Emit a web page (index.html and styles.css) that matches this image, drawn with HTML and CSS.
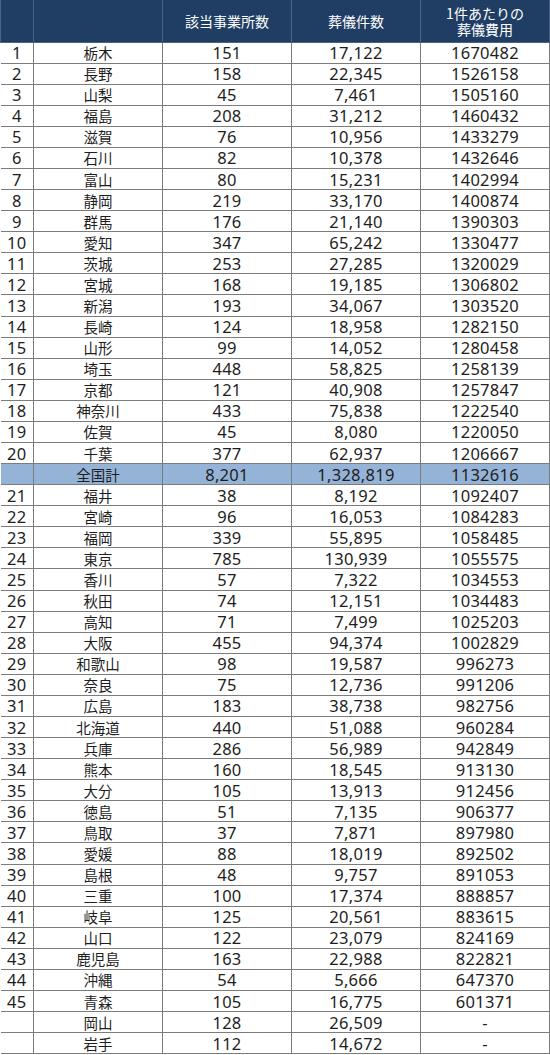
FILE: index.html
```html
<!DOCTYPE html>
<html lang="ja">
<head>
<meta charset="utf-8">
<link rel="stylesheet" href="styles.css">
</head>
<body>
<table class="rank-table">
<colgroup>
<col class="c-rank"><col class="c-name"><col class="c-num"><col class="c-num"><col class="c-num">
</colgroup>
<thead>
<tr class="head-row"><th></th><th></th><th>該当事業所数</th><th>葬儀件数</th><th><span class="hl">1件あたりの</span><span class="hl">葬儀費用</span></th></tr>
</thead>
<tbody>
<tr><td class="rank">1</td><td class="name">栃木</td><td class="num">151</td><td class="num">17,122</td><td class="num">1670482</td></tr>
<tr><td class="rank">2</td><td class="name">長野</td><td class="num">158</td><td class="num">22,345</td><td class="num">1526158</td></tr>
<tr><td class="rank">3</td><td class="name">山梨</td><td class="num">45</td><td class="num">7,461</td><td class="num">1505160</td></tr>
<tr><td class="rank">4</td><td class="name">福島</td><td class="num">208</td><td class="num">31,212</td><td class="num">1460432</td></tr>
<tr><td class="rank">5</td><td class="name">滋賀</td><td class="num">76</td><td class="num">10,956</td><td class="num">1433279</td></tr>
<tr><td class="rank">6</td><td class="name">石川</td><td class="num">82</td><td class="num">10,378</td><td class="num">1432646</td></tr>
<tr><td class="rank">7</td><td class="name">富山</td><td class="num">80</td><td class="num">15,231</td><td class="num">1402994</td></tr>
<tr><td class="rank">8</td><td class="name">静岡</td><td class="num">219</td><td class="num">33,170</td><td class="num">1400874</td></tr>
<tr><td class="rank">9</td><td class="name">群馬</td><td class="num">176</td><td class="num">21,140</td><td class="num">1390303</td></tr>
<tr><td class="rank">10</td><td class="name">愛知</td><td class="num">347</td><td class="num">65,242</td><td class="num">1330477</td></tr>
<tr><td class="rank">11</td><td class="name">茨城</td><td class="num">253</td><td class="num">27,285</td><td class="num">1320029</td></tr>
<tr><td class="rank">12</td><td class="name">宮城</td><td class="num">168</td><td class="num">19,185</td><td class="num">1306802</td></tr>
<tr><td class="rank">13</td><td class="name">新潟</td><td class="num">193</td><td class="num">34,067</td><td class="num">1303520</td></tr>
<tr><td class="rank">14</td><td class="name">長崎</td><td class="num">124</td><td class="num">18,958</td><td class="num">1282150</td></tr>
<tr><td class="rank">15</td><td class="name">山形</td><td class="num">99</td><td class="num">14,052</td><td class="num">1280458</td></tr>
<tr><td class="rank">16</td><td class="name">埼玉</td><td class="num">448</td><td class="num">58,825</td><td class="num">1258139</td></tr>
<tr><td class="rank">17</td><td class="name">京都</td><td class="num">121</td><td class="num">40,908</td><td class="num">1257847</td></tr>
<tr><td class="rank">18</td><td class="name">神奈川</td><td class="num">433</td><td class="num">75,838</td><td class="num">1222540</td></tr>
<tr><td class="rank">19</td><td class="name">佐賀</td><td class="num">45</td><td class="num">8,080</td><td class="num">1220050</td></tr>
<tr><td class="rank">20</td><td class="name">千葉</td><td class="num">377</td><td class="num">62,937</td><td class="num">1206667</td></tr>
<tr class="total"><td class="rank"></td><td class="name">全国計</td><td class="num">8,201</td><td class="num">1,328,819</td><td class="num">1132616</td></tr>
<tr><td class="rank">21</td><td class="name">福井</td><td class="num">38</td><td class="num">8,192</td><td class="num">1092407</td></tr>
<tr><td class="rank">22</td><td class="name">宮崎</td><td class="num">96</td><td class="num">16,053</td><td class="num">1084283</td></tr>
<tr><td class="rank">23</td><td class="name">福岡</td><td class="num">339</td><td class="num">55,895</td><td class="num">1058485</td></tr>
<tr><td class="rank">24</td><td class="name">東京</td><td class="num">785</td><td class="num">130,939</td><td class="num">1055575</td></tr>
<tr><td class="rank">25</td><td class="name">香川</td><td class="num">57</td><td class="num">7,322</td><td class="num">1034553</td></tr>
<tr><td class="rank">26</td><td class="name">秋田</td><td class="num">74</td><td class="num">12,151</td><td class="num">1034483</td></tr>
<tr><td class="rank">27</td><td class="name">高知</td><td class="num">71</td><td class="num">7,499</td><td class="num">1025203</td></tr>
<tr><td class="rank">28</td><td class="name">大阪</td><td class="num">455</td><td class="num">94,374</td><td class="num">1002829</td></tr>
<tr><td class="rank">29</td><td class="name">和歌山</td><td class="num">98</td><td class="num">19,587</td><td class="num">996273</td></tr>
<tr><td class="rank">30</td><td class="name">奈良</td><td class="num">75</td><td class="num">12,736</td><td class="num">991206</td></tr>
<tr><td class="rank">31</td><td class="name">広島</td><td class="num">183</td><td class="num">38,738</td><td class="num">982756</td></tr>
<tr><td class="rank">32</td><td class="name">北海道</td><td class="num">440</td><td class="num">51,088</td><td class="num">960284</td></tr>
<tr><td class="rank">33</td><td class="name">兵庫</td><td class="num">286</td><td class="num">56,989</td><td class="num">942849</td></tr>
<tr><td class="rank">34</td><td class="name">熊本</td><td class="num">160</td><td class="num">18,545</td><td class="num">913130</td></tr>
<tr><td class="rank">35</td><td class="name">大分</td><td class="num">105</td><td class="num">13,913</td><td class="num">912456</td></tr>
<tr><td class="rank">36</td><td class="name">徳島</td><td class="num">51</td><td class="num">7,135</td><td class="num">906377</td></tr>
<tr><td class="rank">37</td><td class="name">鳥取</td><td class="num">37</td><td class="num">7,871</td><td class="num">897980</td></tr>
<tr><td class="rank">38</td><td class="name">愛媛</td><td class="num">88</td><td class="num">18,019</td><td class="num">892502</td></tr>
<tr><td class="rank">39</td><td class="name">島根</td><td class="num">48</td><td class="num">9,757</td><td class="num">891053</td></tr>
<tr><td class="rank">40</td><td class="name">三重</td><td class="num">100</td><td class="num">17,374</td><td class="num">888857</td></tr>
<tr><td class="rank">41</td><td class="name">岐阜</td><td class="num">125</td><td class="num">20,561</td><td class="num">883615</td></tr>
<tr><td class="rank">42</td><td class="name">山口</td><td class="num">122</td><td class="num">23,079</td><td class="num">824169</td></tr>
<tr><td class="rank">43</td><td class="name">鹿児島</td><td class="num">163</td><td class="num">22,988</td><td class="num">822821</td></tr>
<tr><td class="rank">44</td><td class="name">沖縄</td><td class="num">54</td><td class="num">5,666</td><td class="num">647370</td></tr>
<tr><td class="rank">45</td><td class="name">青森</td><td class="num">105</td><td class="num">16,775</td><td class="num">601371</td></tr>
<tr><td class="rank"></td><td class="name">岡山</td><td class="num">128</td><td class="num">26,509</td><td class="num">-</td></tr>
<tr><td class="rank"></td><td class="name">岩手</td><td class="num">112</td><td class="num">14,672</td><td class="num">-</td></tr>
</tbody>
</table>
</body>
</html>
```

FILE: styles.css
```css
html, body {
  margin: 0;
  padding: 0;
  background: #ffffff;
}

.rank-table {
  width: 550px;
  table-layout: fixed;
  border-collapse: collapse;
  font-family: "Noto Sans", "Noto Sans CJK JP", sans-serif;
  color: #1e1e1e;
}

.c-rank { width: 33px; }
.c-name { width: 129px; }
.c-num { width: 129px; }

.head-row {
  height: 42px;
}

.head-row th {
  background: #203e63;
  color: #ffffff;
  font-weight: normal;
  font-family: "Noto Sans CJK JP", sans-serif;
  font-size: 14px;
  line-height: 16px;
  text-align: center;
  vertical-align: middle;
  padding: 0;
  border: 1px solid #4a6384;
  border-top: none;
}

.hl {
  display: block;
  height: 16px;
  overflow: visible;
}

.rank-table tbody tr {
  height: 21.08px;
}

.rank-table td {
  border: 1px solid #7c7c7c;
  padding: 0;
  text-align: center;
  vertical-align: middle;
  line-height: 19px;
  white-space: nowrap;
}

.rank-table td:first-child { border-left: none; }

.rank, .num {
  font-size: 16.5px;
  letter-spacing: 0.3px;
}

.name {
  font-family: "Noto Sans CJK JP", sans-serif;
  font-size: 14.5px;
}

.total td {
  background: #95b3d7;
}
```
